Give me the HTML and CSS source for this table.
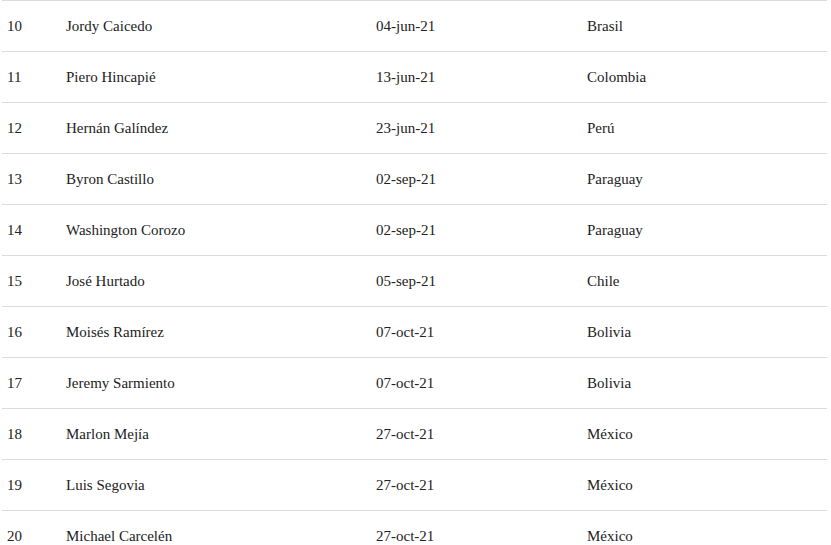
FILE: index.html
```html
<!DOCTYPE html>
<html lang="es">
<head>
<meta charset="utf-8">
<link rel="stylesheet" href="styles.css">
</head>
<body>
<table class="players">
<colgroup>
<col class="c-num"><col class="c-name"><col class="c-date"><col class="c-country">
</colgroup>
<tbody>
<tr><td>10</td><td>Jordy Caicedo</td><td>04-jun-21</td><td>Brasil</td></tr>
<tr><td>11</td><td>Piero Hincapié</td><td>13-jun-21</td><td>Colombia</td></tr>
<tr><td>12</td><td>Hernán Galíndez</td><td>23-jun-21</td><td>Perú</td></tr>
<tr><td>13</td><td>Byron Castillo</td><td>02-sep-21</td><td>Paraguay</td></tr>
<tr><td>14</td><td>Washington Corozo</td><td>02-sep-21</td><td>Paraguay</td></tr>
<tr><td>15</td><td>José Hurtado</td><td>05-sep-21</td><td>Chile</td></tr>
<tr><td>16</td><td>Moisés Ramírez</td><td>07-oct-21</td><td>Bolivia</td></tr>
<tr><td>17</td><td>Jeremy Sarmiento</td><td>07-oct-21</td><td>Bolivia</td></tr>
<tr><td>18</td><td>Marlon Mejía</td><td>27-oct-21</td><td>México</td></tr>
<tr><td>19</td><td>Luis Segovia</td><td>27-oct-21</td><td>México</td></tr>
<tr><td>20</td><td>Michael Carcelén</td><td>27-oct-21</td><td>México</td></tr>
</tbody>
</table>
</body>
</html>
```
FILE: styles.css
```css
html, body {
  margin: 0;
  padding: 0;
  background: #fff;
}
body {
  padding: 0 4px 0 2px;
  font-family: "Liberation Serif", "Times New Roman", serif;
  font-size: 15px;
  color: #222;
}
.players {
  width: 825px;
  border-collapse: collapse;
  table-layout: fixed;
}
.c-num { width: 59px; }
.c-name { width: 310px; }
.c-date { width: 211px; }
.c-country { width: 245px; }
.players td {
  border-top: 1px solid #dcdcdc;
  height: 50px;
  padding: 0 0 0 5px;
  vertical-align: middle;
  line-height: 18px;
  white-space: nowrap;
}
```
